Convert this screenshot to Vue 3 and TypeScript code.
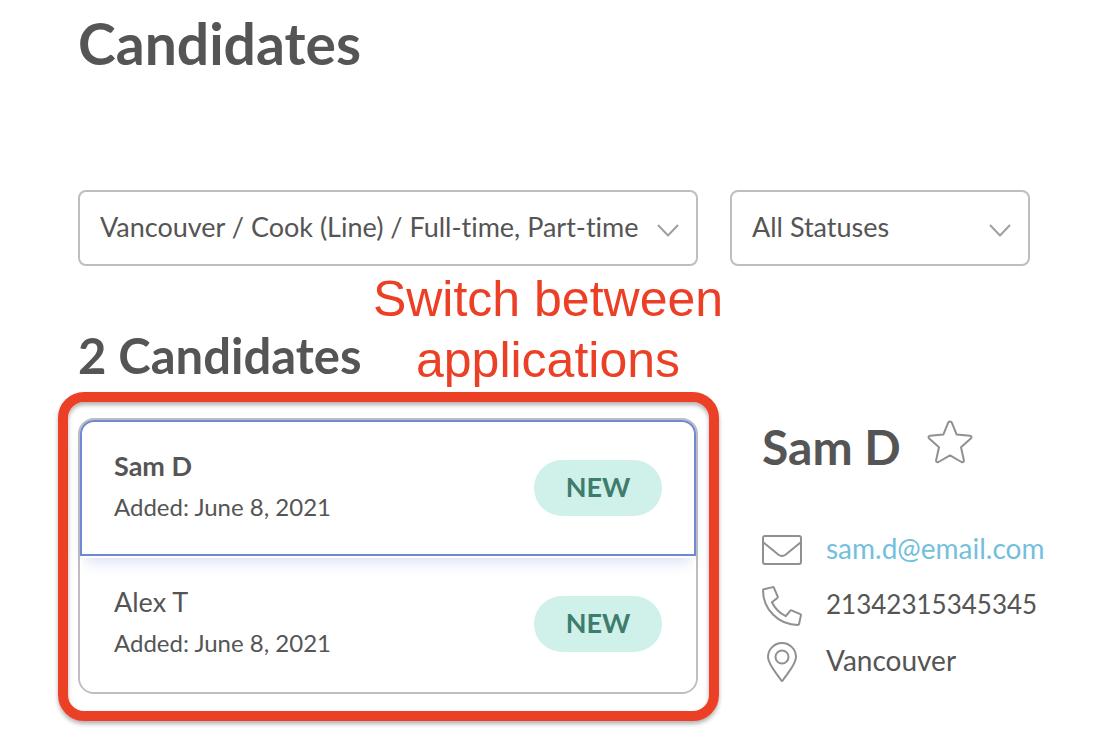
<script setup lang="ts">
import { computed, ref } from 'vue'

interface Candidate {
  id: number
  name: string
  added: string
  status: string
  email: string
  phone: string
  city: string
}

const candidates: Candidate[] = [
  { id: 1, name: 'Sam D', added: 'June 8, 2021', status: 'NEW', email: 'sam.d@email.com', phone: '21342315345345', city: 'Vancouver' },
  { id: 2, name: 'Alex T', added: 'June 8, 2021', status: 'NEW', email: '', phone: '', city: 'Vancouver' },
]

const jobs = ['Vancouver / Cook (Line) / Full-time, Part-time']
const statuses = ['All Statuses', 'New']

const job = ref(jobs[0])
const status = ref(statuses[0])
const selectedId = ref(1)
const starred = ref(false)

const selected = computed(() => candidates.find((c) => c.id === selectedId.value) ?? candidates[0])
</script>

<template>
  <main class="page">
    <h1 class="title">Candidates</h1>

    <div class="columns filters">
      <div class="picker">
        <select v-model="job" class="select" aria-label="Job">
          <option v-for="j in jobs" :key="j" :value="j">{{ j }}</option>
        </select>
        <svg class="chevron" viewBox="0 0 22 14" aria-hidden="true"><path d="M1 2 11 12.5 21 2" /></svg>
      </div>
      <div class="picker">
        <select v-model="status" class="select" aria-label="Status">
          <option v-for="s in statuses" :key="s" :value="s">{{ s }}</option>
        </select>
        <svg class="chevron" viewBox="0 0 22 14" aria-hidden="true"><path d="M1 2 11 12.5 21 2" /></svg>
      </div>
    </div>

    <div class="columns">
      <section class="results">
        <h2 class="count">{{ candidates.length }} Candidates</h2>
        <p class="note">Switch between applications</p>
        <div class="marked">
          <ul class="list">
            <li v-for="c in candidates" :key="c.id">
              <button
                type="button"
                class="card"
                :class="{ active: c.id === selectedId }"
                :aria-pressed="c.id === selectedId"
                @click="selectedId = c.id"
              >
                <span class="who">
                  <span class="name">{{ c.name }}</span>
                  <span class="added">Added: {{ c.added }}</span>
                </span>
                <span class="badge">{{ c.status }}</span>
              </button>
            </li>
          </ul>
          <div class="outline" aria-hidden="true"></div>
        </div>
      </section>

      <section class="details">
        <div class="heading">
          <h2 class="person">{{ selected.name }}</h2>
          <button type="button" class="star" aria-label="Star candidate" :aria-pressed="starred" @click="starred = !starred">
            <svg viewBox="0 0 46 44" aria-hidden="true">
              <path d="M21.3 2.4Q23 .4 24.7 2.4L29.7 14.6 42.9 15.7Q45.6 16.4 43.8 18.5L34 27.2 36.9 40.2Q37 42.8 34.5 42L23 35.4 11.5 42Q9 42.8 9.1 40.2L12 27.2 2.2 18.5Q.4 16.4 3.1 15.7L16.3 14.6Z" />
            </svg>
          </button>
        </div>
        <ul class="contact">
          <li>
            <svg viewBox="0 0 40 40" aria-hidden="true">
              <rect x="1" y="6" width="38" height="28" rx="2" />
              <path d="M1.5 12.5 16.5 24.7Q20 27.2 23.5 24.7L38.5 12.5" />
            </svg>
            <a class="value" :href="'mailto:' + selected.email">{{ selected.email }}</a>
          </li>
          <li>
            <svg viewBox="0 0 40 40" aria-hidden="true">
              <path d="M1.8 3.2 10.9 1.1Q11.7 1 12 1.8L15.7 10.6Q16 11.4 15.3 12L9.9 16.3C12.8 22.3 17.7 27.2 23.8 30.2L28.1 24.8Q28.7 24.1 29.5 24.4L38.3 28.2Q39.1 28.6 38.9 29.4L37 38.2Q36.7 39 35.9 39C16.6 39 1 23.4 1 4.2Q1 3.4 1.8 3.2Z" />
            </svg>
            <span class="value digits">{{ selected.phone }}</span>
          </li>
          <li>
            <svg viewBox="0 0 40 40" aria-hidden="true">
              <path d="M20 39Q19.5 39 18.8 37.7C13 29.3 6 22 6 15A14 14 0 0 1 34 15C34 22 27 29.3 21.2 37.7Q20.5 39 20 39Z" />
              <circle cx="20" cy="15" r="6.5" />
            </svg>
            <span class="value">{{ selected.city }}</span>
          </li>
        </ul>
      </section>
    </div>
  </main>
</template>

<style>
body {
  margin: 0;
  background: #fff;
}
</style>

<style scoped>
.page {
  box-sizing: border-box;
  padding: 11px 73px 44px 78px;
  color: #555;
  font-family: Lato, "Open Sans", sans-serif;
  font-size: 27px;
  font-variant-ligatures: none;
  line-height: 32px;
}

h1,
h2,
p,
ul {
  margin: 0;
  padding: 0;
}

ul {
  list-style: none;
}

.title {
  font-size: 57px;
  line-height: 64px;
  font-weight: 700;
}

.columns {
  display: grid;
  grid-template-columns: minmax(0, 1fr) 300px;
  column-gap: 32px;
}

.filters {
  margin-top: 115px;
}

.picker {
  position: relative;
}

.select {
  display: block;
  box-sizing: border-box;
  width: 100%;
  height: 76px;
  padding: 0 50px 2px 20px;
  border: 2px solid #bebebe;
  border-radius: 8px;
  background: #fff;
  color: inherit;
  font: inherit;
  font-variant-ligatures: none;
  appearance: none;
}

.chevron {
  position: absolute;
  top: 33px;
  right: 19px;
  width: 22px;
  height: 14px;
  stroke: #a0a0a0;
  pointer-events: none;
}

.results {
  position: relative;
  padding-top: 61px;
}

.count {
  font-size: 49px;
  line-height: 56px;
  font-weight: 700;
}

.note {
  position: absolute;
  top: 3px;
  left: 290px;
  width: 360px;
  color: #ec4026;
  font-family: "Liberation Sans", Arial, sans-serif;
  font-size: 50px;
  line-height: 61px;
  text-align: center;
}

.marked {
  position: relative;
  margin-top: 35px;
}

.outline {
  position: absolute;
  inset: -26px -21px -27px -20px;
  border: 10px solid #ec4026;
  border-radius: 26px;
  box-shadow: 0 3px 4px rgba(0, 0, 0, 0.3), inset 0 3px 4px rgba(0, 0, 0, 0.3);
  pointer-events: none;
}

.list {
  border: 2px solid #bebebe;
  border-radius: 16px;
}

.card {
  display: flex;
  align-items: center;
  justify-content: space-between;
  box-sizing: border-box;
  width: 100%;
  height: 136px;
  padding: 0 32px;
  border: 2px solid #fff;
  border-radius: 0 0 14px 14px;
  background: transparent;
  color: inherit;
  font: inherit;
  text-align: left;
}

.card.active {
  border-color: #6e88d6;
  border-radius: 14px 14px 0 0;
  box-shadow: 0 10px 16px -6px rgba(110, 128, 220, 0.32);
}

.who {
  display: flex;
  flex-direction: column;
  gap: 9px;
  padding-bottom: 3px;
}

.active .name {
  font-weight: 700;
}

.added {
  font-size: 24px;
}

.badge {
  box-sizing: border-box;
  width: 128px;
  height: 56px;
  border-radius: 28px;
  background: #d0f0ea;
  color: #3e7d6e;
  font-weight: 700;
  line-height: 54px;
  text-align: center;
}

.details {
  padding: 151px 0 0 32px;
  white-space: nowrap;
}

.heading {
  display: flex;
  align-items: center;
  gap: 26px;
}

.person {
  font-size: 48px;
  line-height: 60px;
  font-weight: 700;
}

.star {
  display: block;
  padding: 0;
  border: 0;
  margin-bottom: 10px;
  background: none;
}

.star svg {
  display: block;
  width: 46px;
  height: 44px;
}

svg {
  fill: none;
  stroke: #909090;
  stroke-width: 2;
  stroke-linejoin: round;
}

.contact {
  display: grid;
  gap: 16px;
  margin-top: 53px;
}

.contact li {
  display: flex;
  align-items: center;
  gap: 24px;
}

.contact svg {
  flex: none;
  width: 40px;
  height: 40px;
}

.value {
  padding-bottom: 4px;
  font-size: 28px;
}

.digits {
  font-size: 26px;
}

a.value {
  color: #74bfdd;
  text-decoration: none;
}
</style>
